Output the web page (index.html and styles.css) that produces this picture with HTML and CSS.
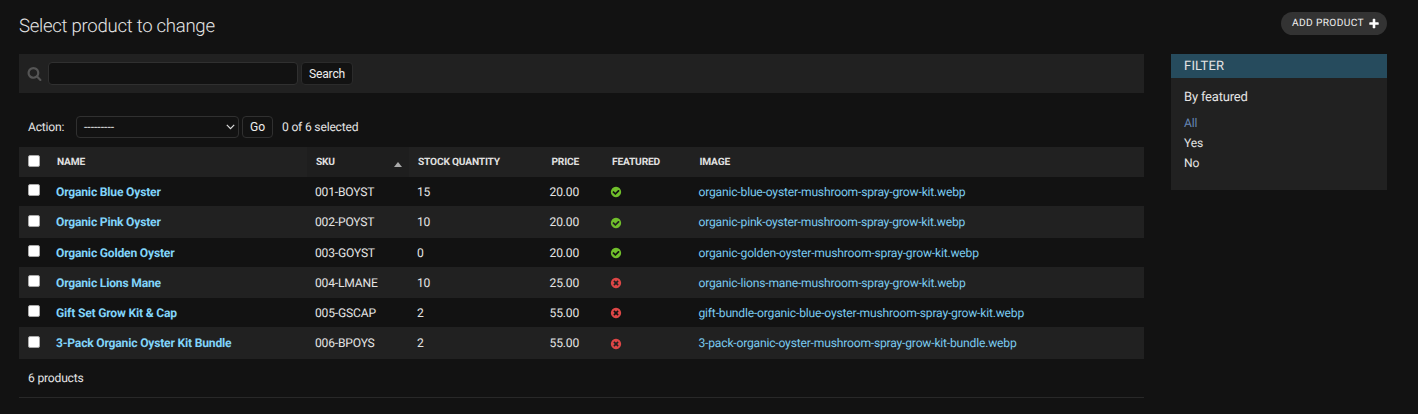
FILE: index.html
```html
<!DOCTYPE html>
<html lang="en">
<head>
<meta charset="utf-8">
<title>Select product to change</title>
<link rel="stylesheet" href="styles.css">
</head>
<body>
<svg class="sprite" width="0" height="0">
  <symbol id="yes" viewBox="0 0 1792 1792"><path fill="#70bf2b" d="M1412 734q0-28-18-46l-91-90q-19-19-45-19t-45 19l-408 407-226-226q-19-19-45-19t-45 19l-91 90q-18 18-18 46 0 27 18 45l362 362q19 19 45 19 27 0 46-19l543-543q18-18 18-45zm252 162q0 209-103 385.500t-279.500 279.500-385.500 103-385.500-103-279.500-279.500-103-385.500 103-385.500 279.500-279.500 385.500-103 385.500 103 279.500 279.500 103 385.500z"/></symbol>
  <symbol id="no" viewBox="0 0 1792 1792"><path fill="#dd4646" d="M1277 1122q0-26-19-45l-181-181 181-181q19-19 19-45 0-27-19-46l-90-90q-19-19-46-19-26 0-45 19l-181 181-181-181q-19-19-45-19-27 0-46 19l-90 90q-19 19-19 46 0 26 19 45l181 181-181 181q-19 19-19 45 0 27 19 46l90 90q19 19 46 19 26 0 45-19l181-181 181 181q19 19 45 19 27 0 46-19l90-90q19-19 19-46zm387-226q0 209-103 385.500t-279.500 279.500-385.500 103-385.500-103-279.500-279.500-103-385.500 103-385.500 279.500-279.500 385.500-103 385.500 103 279.500 279.500 103 385.500z"/></symbol>
</svg>
<div class="page">
  <header class="top">
    <h1>Select product to change</h1>
    <a class="add">ADD PRODUCT
      <svg width="12" height="12" viewBox="0 0 1792 1792"><path fill="#fff" d="M1600 736v192q0 40-28 68t-68 28h-416v416q0 40-28 68t-68 28h-192q-40 0-68-28t-28-68v-416h-416q-40 0-68-28t-28-68v-192q0-40 28-68t68-28h416v-416q0-40 28-68t68-28h192q40 0 68 28t28 68v416h416q40 0 68 28t28 68z"/></svg>
    </a>
  </header>
  <div class="content">
    <main class="main">
      <form class="search">
        <svg width="15" height="15" viewBox="0 0 1792 1792"><path fill="#555" d="M1216 832q0-185-131.500-316.500t-316.500-131.500-316.500 131.500-131.500 316.500 131.500 316.500 316.500 131.500 316.500-131.500 131.500-316.500zm512 832q0 52-38 90t-90 38q-54 0-90-38l-343-342q-179 124-399 124-143 0-273.500-55.500t-225-150-150-225-55.500-273.500 55.500-273.500 150-225 225-150 273.500-55.500 273.500 55.500 225 150 150 225 55.500 273.500q0 220-124 399l343 343q37 37 37 90z"/></svg>
        <input class="query" type="text" aria-label="Search products">
        <button class="btn btn-search" type="button">Search</button>
      </form>
      <div class="actions">
        <span class="label">Action:</span>
        <div class="select"><span>---------</span>
          <svg width="9" height="6" viewBox="0 0 9 6"><path d="M.8.8 4.500 4.600 8.200.8" fill="none" stroke="#ddd" stroke-width="1.200"/></svg>
        </div>
        <button class="btn btn-go" type="button">Go</button>
        <span class="count">0 of 6 selected</span>
      </div>
      <table class="list">
        <colgroup><col class="c-check"><col class="c-name"><col class="c-sku"><col class="c-stock"><col class="c-price"><col class="c-feat"><col></colgroup>
        <thead>
          <tr><th><span class="box"></span></th><th>NAME</th><th class="sorted"><div class="sort"><span>SKU</span><svg width="8" height="5" viewBox="0 0 8 5"><path d="M0 5 4 0l4 5z" fill="#aaa"/></svg></div></th><th>STOCK QUANTITY</th><th class="num">PRICE</th><th class="feat">FEATURED</th><th>IMAGE</th></tr>
        </thead>
        <tbody>
          <tr><td><span class="box"></span></td><td class="name">Organic Blue Oyster</td><td>001-BOYST</td><td>15</td><td class="num">20.00</td><td class="feat"><svg class="flag"><use href="#yes"/></svg></td><td class="file">organic-blue-oyster-mushroom-spray-grow-kit.webp</td></tr>
          <tr><td><span class="box"></span></td><td class="name">Organic Pink Oyster</td><td>002-POYST</td><td>10</td><td class="num">20.00</td><td class="feat"><svg class="flag"><use href="#yes"/></svg></td><td class="file">organic-pink-oyster-mushroom-spray-grow-kit.webp</td></tr>
          <tr><td><span class="box"></span></td><td class="name">Organic Golden Oyster</td><td>003-GOYST</td><td>0</td><td class="num">20.00</td><td class="feat"><svg class="flag"><use href="#yes"/></svg></td><td class="file">organic-golden-oyster-mushroom-spray-grow-kit.webp</td></tr>
          <tr class="short"><td><span class="box"></span></td><td class="name">Organic Lions Mane</td><td>004-LMANE</td><td>10</td><td class="num">25.00</td><td class="feat"><svg class="flag"><use href="#no"/></svg></td><td class="file">organic-lions-mane-mushroom-spray-grow-kit.webp</td></tr>
          <tr><td><span class="box"></span></td><td class="name">Gift Set Grow Kit &amp; Cap</td><td>005-GSCAP</td><td>2</td><td class="num">55.00</td><td class="feat"><svg class="flag"><use href="#no"/></svg></td><td class="file">gift-bundle-organic-blue-oyster-mushroom-spray-grow-kit.webp</td></tr>
          <tr><td><span class="box"></span></td><td class="name">3-Pack Organic Oyster Kit Bundle</td><td>006-BPOYS</td><td>2</td><td class="num">55.00</td><td class="feat"><svg class="flag"><use href="#no"/></svg></td><td class="file">3-pack-organic-oyster-mushroom-spray-grow-kit-bundle.webp</td></tr>
        </tbody>
      </table>
      <div class="paginator">6 products</div>
    </main>
    <aside class="filter">
      <h2>FILTER</h2>
      <h3>By featured</h3>
      <ul><li class="selected">All</li><li>Yes</li><li>No</li></ul>
    </aside>
  </div>
</div>
</body>
</html>
```
FILE: styles.css
```css
* { box-sizing: border-box; }
body {
  margin: 0;
  height: 414px;
  overflow: hidden;
  background: #121212;
  color: #e4e4e4;
  font: 12.1px/16px Roboto, "Liberation Sans", sans-serif;
  letter-spacing: -.19px;
  text-rendering: geometricPrecision;
}
.sprite { display: block; }
.page { padding: 12px 31px 0 19px; }
.top { display: flex; justify-content: space-between; height: 42px; }
h1 { margin: 2px 0 0; font-size: 18.6px; line-height: 24px; font-weight: 300; letter-spacing: -.29px; }
.add {
  display: flex;
  align-items: center;
  justify-content: space-between;
  width: 106px;
  height: 23px;
  padding: 1px 7px 0 11px;
  border-radius: 12px;
  background: #333;
  color: #eee;
  font-size: 10.2px;
  letter-spacing: .35px;
  white-space: nowrap;
}
.add svg { flex: none; }
.content { display: flex; gap: 26.500px; align-items: flex-start; }
.main { width: 1125px; }
.search { display: flex; align-items: center; height: 39px; padding-left: 8px; background: #212121; }
.query {
  width: 250px;
  height: 23px;
  margin: 0 3px 0 6px;
  border: 1px solid #303030;
  border-radius: 4px;
  background: #121212;
}
.btn {
  height: 23px;
  padding: 0;
  border: 1px solid #2b2b2b;
  border-radius: 4px;
  background: #121212;
  color: #eee;
  font: 12.1px/16px Roboto, "Liberation Sans", sans-serif;
  letter-spacing: -.19px;
}
.btn-search { width: 52px; }
.actions { display: flex; align-items: center; height: 54px; padding: 14px 0 0 9px; }
.label { width: 48px; }
.select {
  display: flex;
  align-items: center;
  justify-content: space-between;
  width: 163px;
  height: 22px;
  padding: 0 3px 0 7px;
  border: 1px solid #303030;
  border-radius: 4px;
  letter-spacing: 0;
}
.btn-go { width: 31px; height: 22px; margin: 0 9px 0 3px; border-color: #303030; }
.list { width: 1125px; table-layout: fixed; border-collapse: separate; border-spacing: 0; }
.c-check { width: 29px; }
.c-name { width: 259px; }
.c-sku { width: 102px; }
.c-stock { width: 120px; }
.c-price { width: 58px; }
.c-feat { width: 103.500px; }
th, td { padding: 0 8px; text-align: left; white-space: nowrap; vertical-align: middle; }
th { height: 30px; padding: 1px 8px 0 9px; background: #212121; font-size: 10.2px; font-weight: 700; color: #e0e0e0; }
td { height: 29px; }
th.sorted { padding-right: 7px; background: #1e1e1e; }
.sort { display: flex; justify-content: space-between; align-items: center; }
.sort svg { margin-top: 4px; }
tbody tr:nth-child(even) { background: #212121; }
tbody tr:nth-child(even) td { height: 32px; }
tbody tr.short:nth-child(even) td { height: 31px; }
th:first-child, td:first-child { padding: 0 0 0 9px; }
.num { text-align: right; }
th.feat { padding-left: 25px; }
td.feat { padding-left: 23px; }
.box { display: block; width: 12px; height: 12px; margin-bottom: 3px; border: .5px solid #aaa; border-radius: 2px; background: #fff; }
.flag { display: block; width: 12px; height: 12px; margin-top: 1px; }
.name { color: #81d4fa; font-weight: 700; }
.file { color: #7bcbf0; }
.paginator { height: 39px; padding: 11px 9px; border-bottom: 1px solid #282828; }
.filter { width: 216px; height: 136px; background: #212121; }
h2 { margin: 0; height: 24px; padding-left: 13.500px; background: #264b5d; font-size: 13px; line-height: 26px; font-weight: 400; letter-spacing: .2px; }
h3 { margin: 11px 0 8px 13.500px; font-size: 13px; line-height: 17px; font-weight: 400; }
ul { margin: 0; padding: 0 0 0 13.500px; list-style: none; }
li { height: 20px; line-height: 19px; }
.selected { color: #6586b4; }
```
